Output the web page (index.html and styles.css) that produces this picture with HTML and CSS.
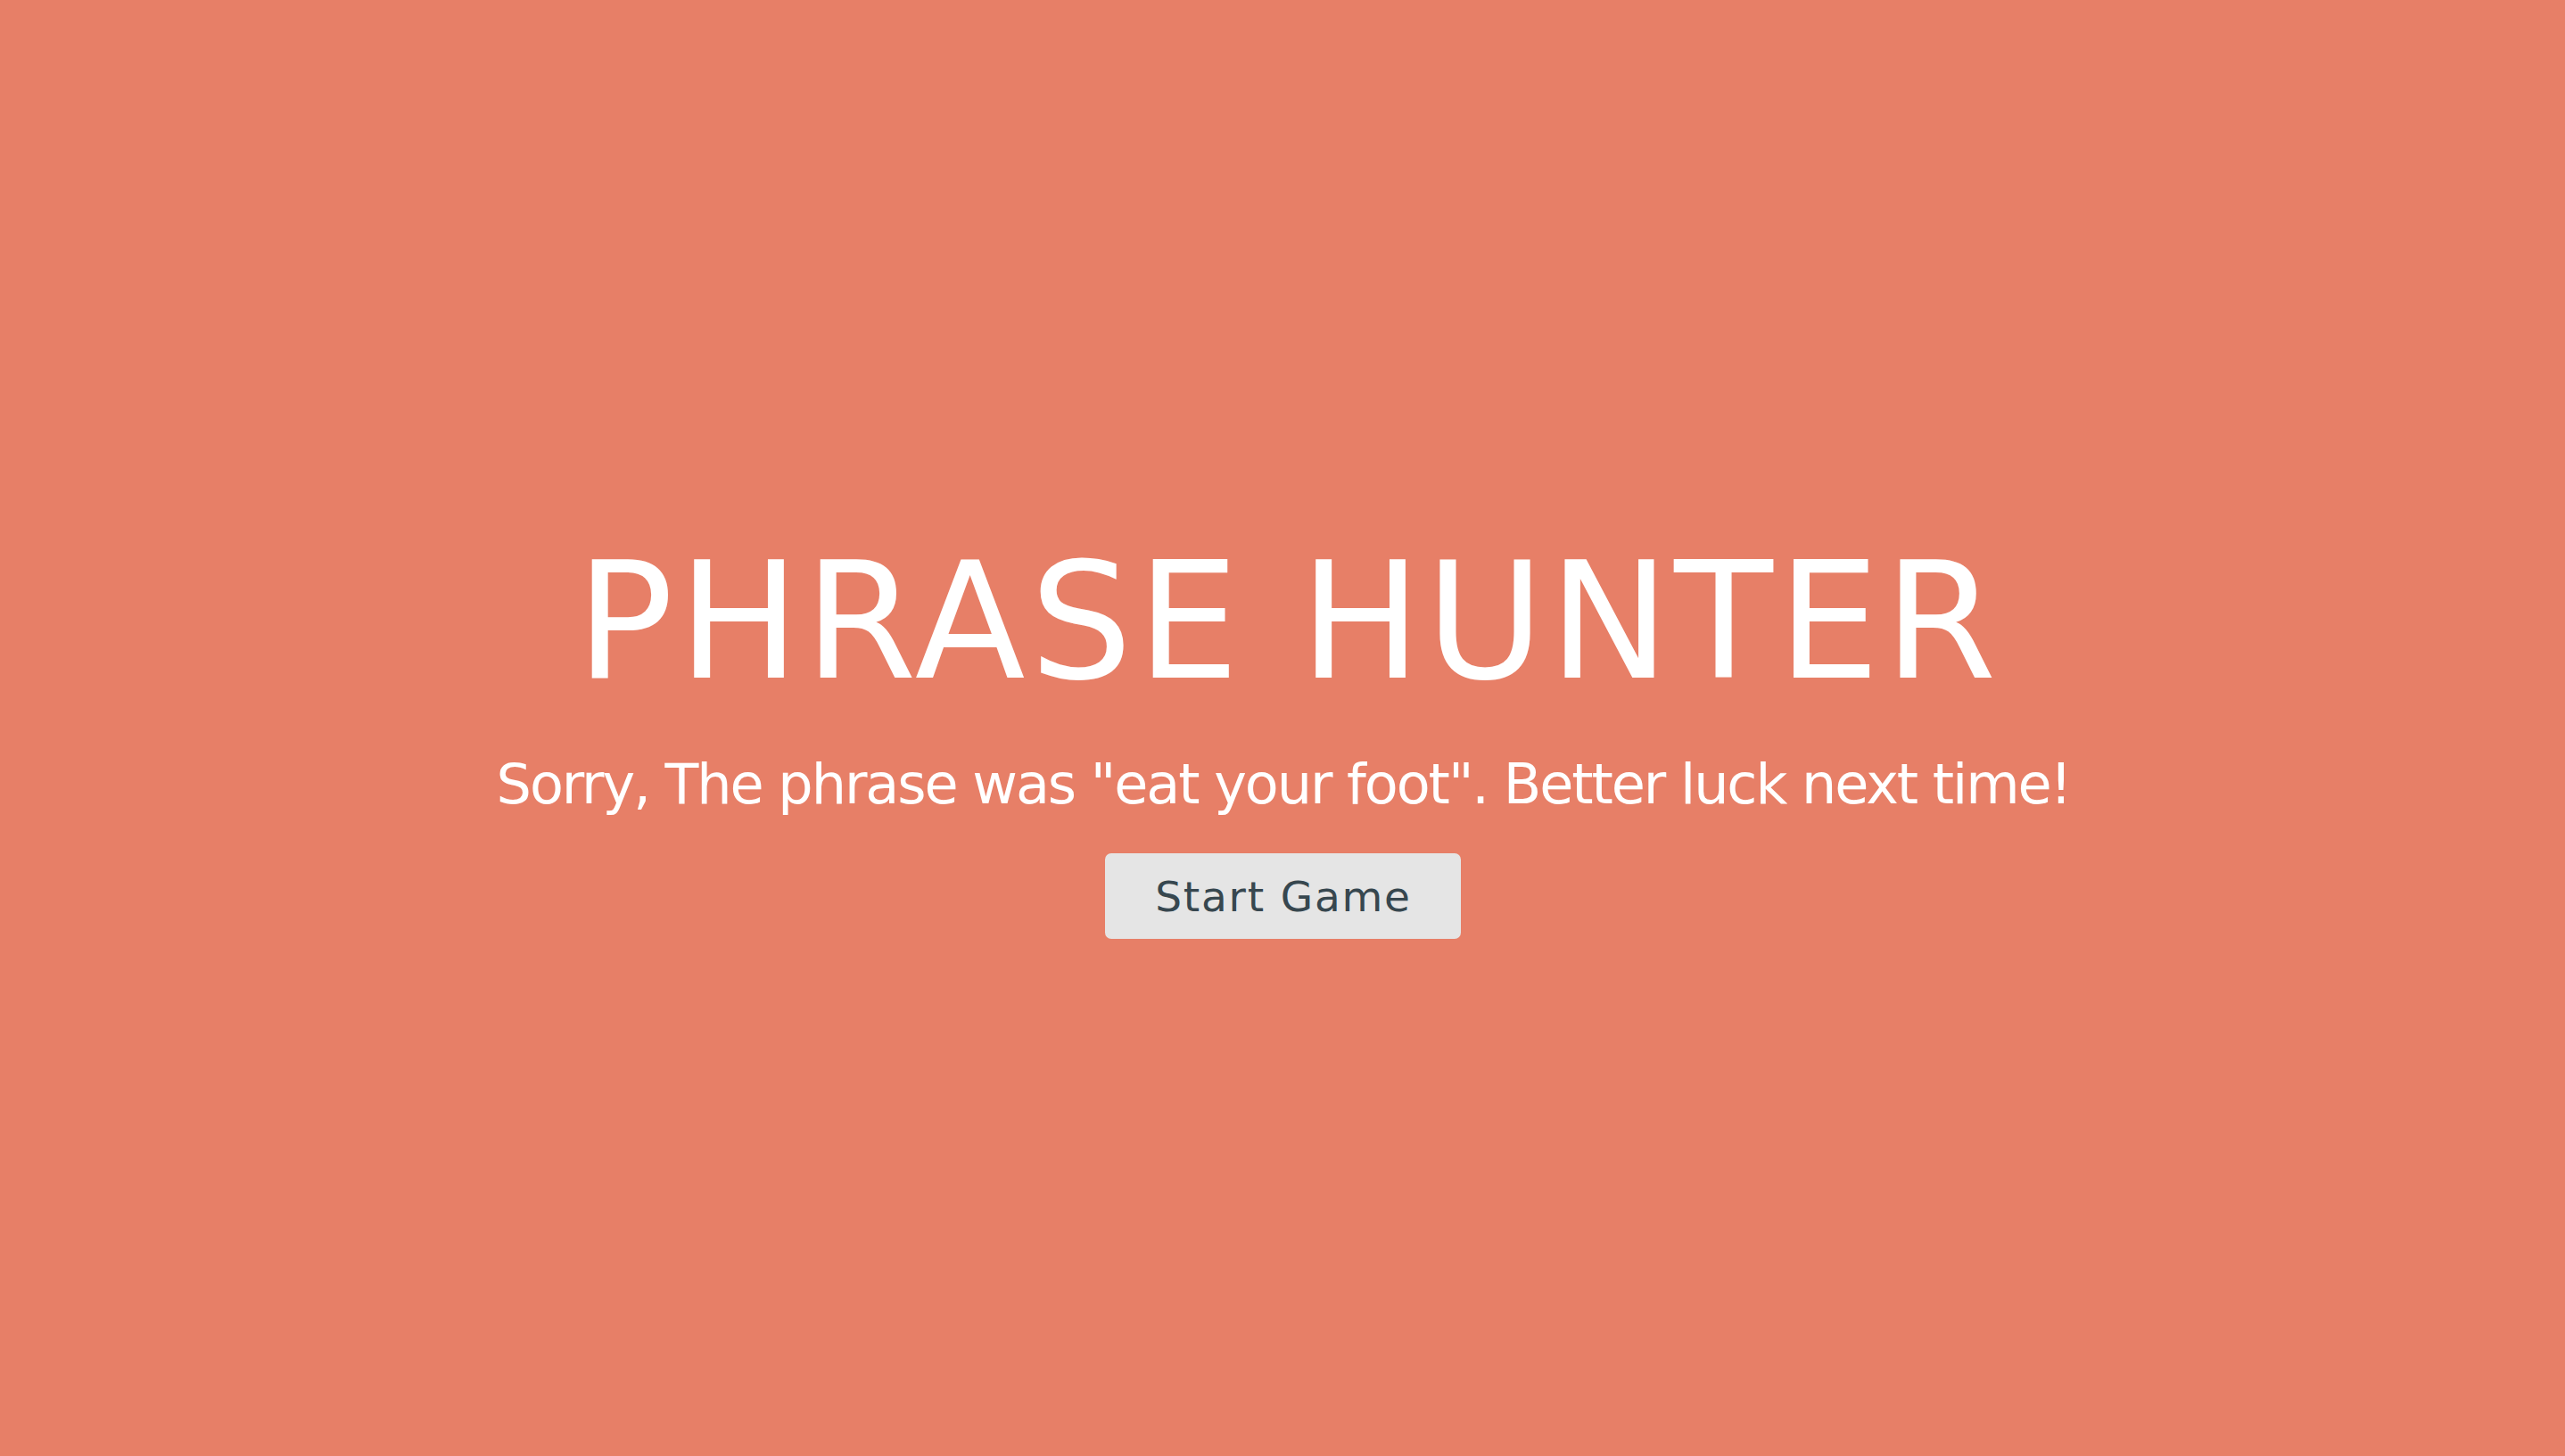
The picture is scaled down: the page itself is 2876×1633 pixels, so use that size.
FILE: index.html
```html
<!DOCTYPE html>
<html>
<head>
<meta charset="utf-8">
<link rel="stylesheet" href="styles.css">
</head>
<body>
<div class="overlay">
  <h2 class="title">PHRASE HUNTER</h2>
  <h1 class="message">Sorry, The phrase was "eat your foot". Better luck next time!</h1>
  <button class="btn-reset">Start Game</button>
</div>
</body>
</html>
```
FILE: styles.css
```css
html, body {
  margin: 0;
  padding: 0;
  height: 100%;
}
body {
  background: #e77f67;
  font-family: "DejaVu Sans", sans-serif;
}
.overlay {
  display: flex;
  flex-direction: column;
  align-items: center;
  padding-top: 607px;
  box-sizing: border-box;
  height: 100%;
}
.title {
  margin: 0;
  font-size: 181px;
  line-height: 1;
  font-weight: normal;
  color: #fff;
  white-space: nowrap;
  letter-spacing: 5.3px;
  padding-left: 14px;
}
.message {
  margin: 61px 0 0;
  font-size: 62px;
  line-height: 1;
  font-weight: normal;
  color: #fff;
  white-space: nowrap;
  letter-spacing: -2.05px;
  padding-left: 2px;
}
.btn-reset {
  margin-top: 46px;
  width: 399px;
  height: 96px;
  border: none;
  border-radius: 7px;
  background: #e5e5e5;
  color: #37474f;
  font-family: "DejaVu Sans", sans-serif;
  font-size: 47px;
  letter-spacing: 1.8px;
  padding: 0 0 0 2px;
}
```
